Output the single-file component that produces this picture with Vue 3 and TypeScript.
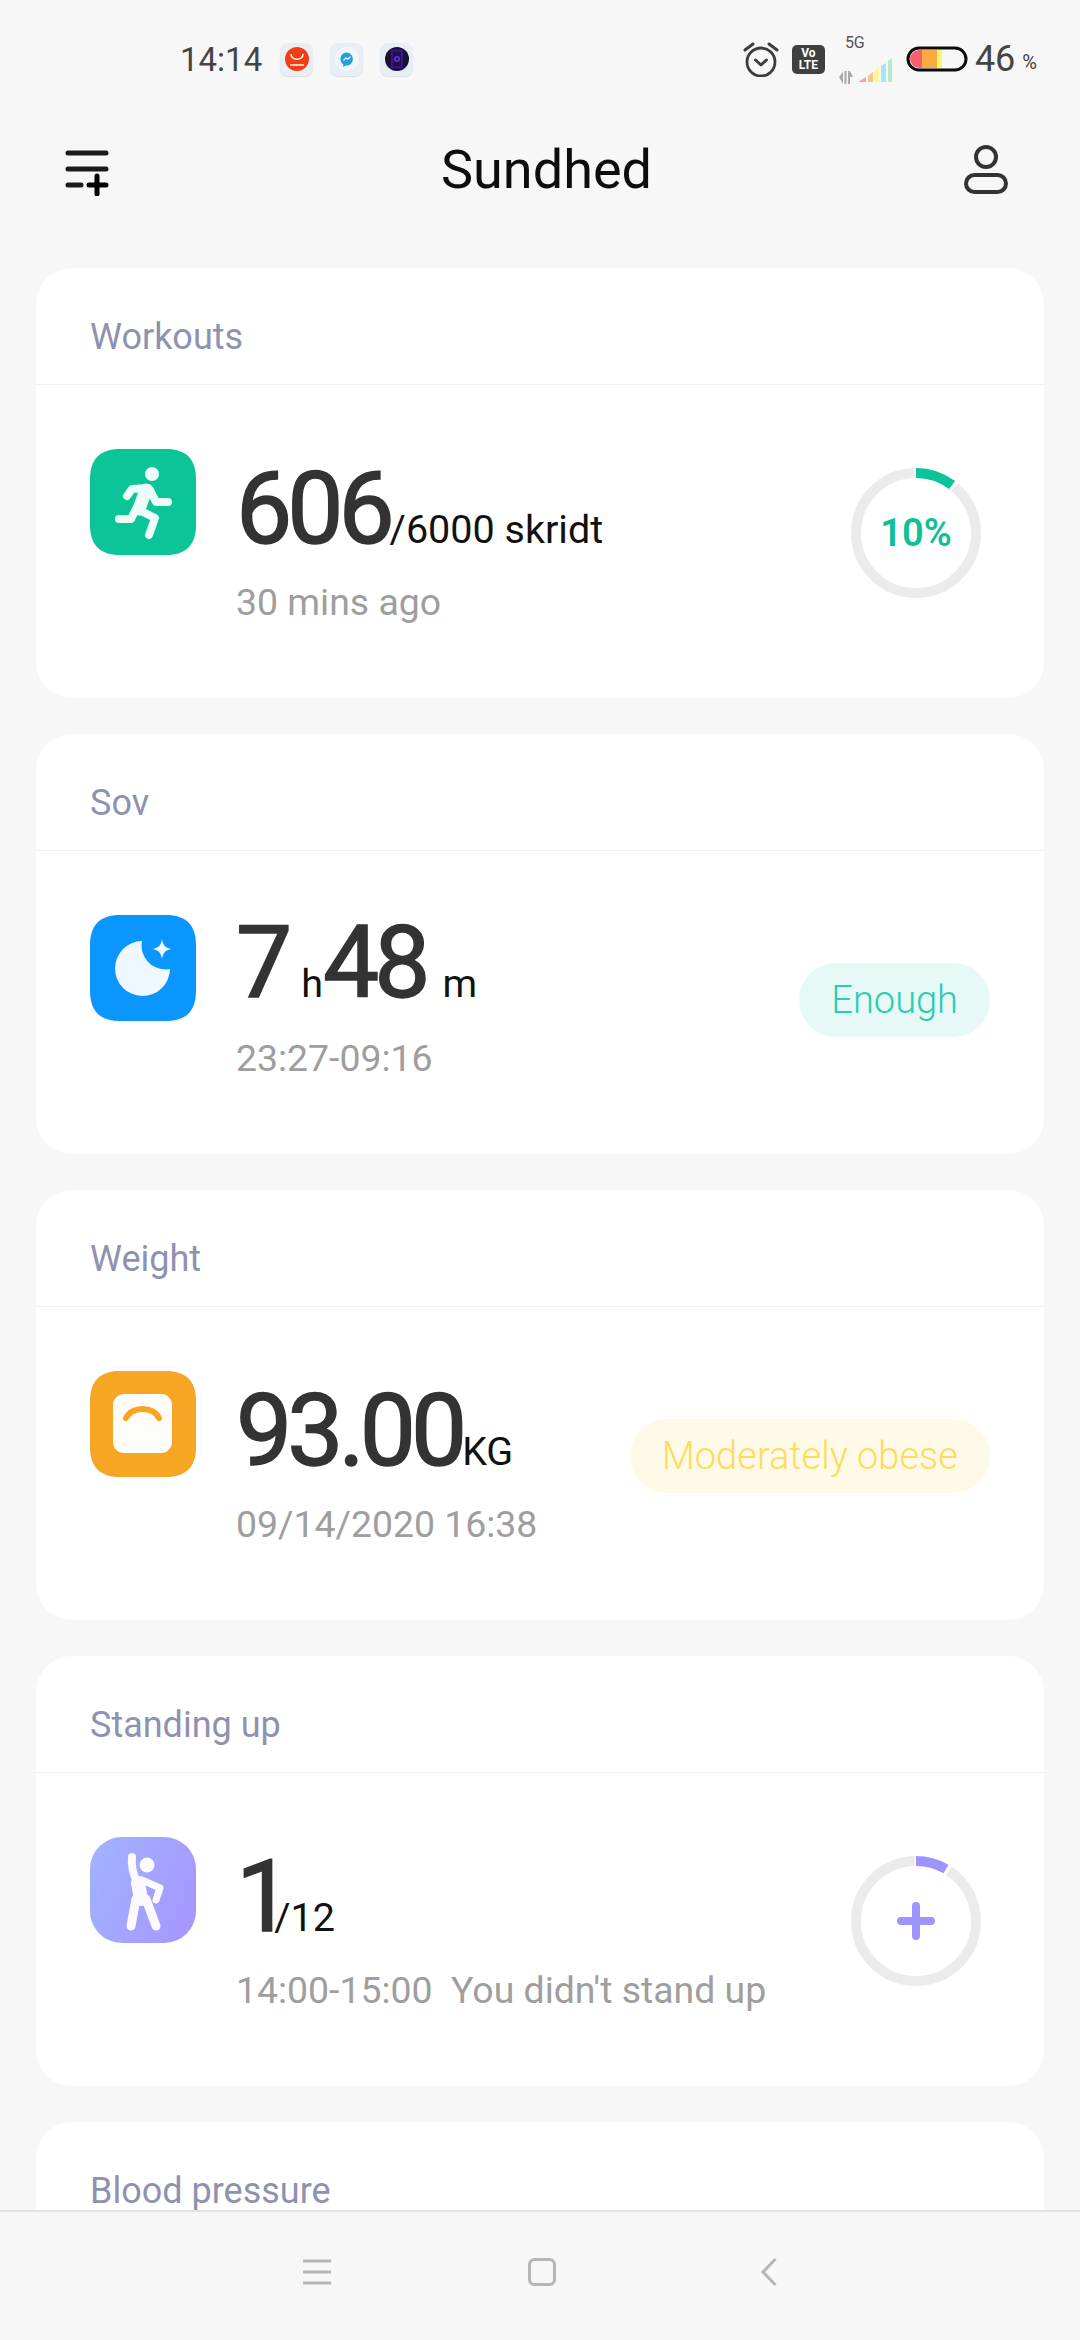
<script setup lang="ts">
const R = 60;
const CIRC = 2 * Math.PI * R;

// dasharray for a piece of the ring, degrees from 12 o'clock
const arc = (from: number, to: number) => {
  const len = ((to - from) / 360) * CIRC;
  const start = (from / 360) * CIRC;
  return { dasharray: `0 ${start} ${len} ${CIRC}` };
};

const squircle =
  'M30 0H76C96 0 106 10 106 30V76C106 96 96 106 76 106H30C10 106 0 96 0 76V30C0 10 10 0 30 0Z';
</script>

<template>
  <div class="page">
    <div class="status">
      <span class="time">14:14</span>
      <div class="app-badge first">
        <svg width="24" height="24" viewBox="0 0 24 24">
          <circle cx="12" cy="12" r="12" fill="#f23d16" />
          <path d="M6 7c0 7 12 7 12 0" fill="none" stroke="#fff" stroke-width="1.6" />
          <path d="M5 18h14" stroke="#ffc9b8" stroke-width="2" />
        </svg>
      </div>
      <div class="app-badge">
        <svg width="24" height="24" viewBox="0 0 24 24">
          <circle cx="12" cy="12" r="12" fill="#f2f6fa" />
          <path d="M12 5.500a6.500 6.500 0 0 0-3.800 11.800V20l2.500-1.400a6.500 6.500 0 1 0 1.300-13.100Z" fill="#239fdc" />
          <path d="M8.500 13.500l2.500-2.700 1.800 1.500 2.700-2.600" fill="none" stroke="#fff" stroke-width="1.200" />
        </svg>
      </div>
      <div class="app-badge">
        <svg width="24" height="24" viewBox="0 0 24 24">
          <circle cx="12" cy="12" r="12" fill="#17122e" />
          <rect x="6" y="2.500" width="12" height="19" fill="#3d0f9e" />
          <rect x="8" y="4.500" width="8" height="15" fill="#1d1440" />
          <circle cx="12" cy="12" r="2.200" fill="none" stroke="#6a2fe0" stroke-width="1.600" />
        </svg>
      </div>

      <div class="status-right">
        <svg class="alarm" width="36" height="35" viewBox="0 0 36 35">
          <circle cx="18" cy="20" r="14" fill="none" stroke="#3d3d3d" stroke-width="2.800" />
          <path d="M2 8l8-6M34 8l-8-6" stroke="#3d3d3d" stroke-width="3" stroke-linecap="round" />
          <path d="M12.500 18l5.500 5 5.500-5" fill="none" stroke="#3d3d3d" stroke-width="3" stroke-linecap="round" stroke-linejoin="round" />
        </svg>
        <div class="volte"><span>Vo</span><span>LTE</span></div>
        <div class="network">
          <span class="five-g">5G</span>
          <svg width="54" height="31" viewBox="0 0 54 31">
            <path d="M0 24l4-5v12zM5.500 18h2v13h-2zM9 18h2l3 6h-3v7H9z" fill="#a9a9a9" />
            <path d="M19 29l8-5v5z" fill="#f4a2aa" />
            <path d="M29 23l5-4v10h-5z" fill="#f8c48e" />
            <path d="M35 18l5-4v15h-5z" fill="#fbf6a4" />
            <path d="M42 13l5-3v19h-5z" fill="#a8e4f8" />
            <path d="M49 8l4-3v24h-4z" fill="#b5ecc2" />
          </svg>
        </div>
        <svg class="battery" width="62" height="26" viewBox="0 0 62 26">
          <path d="M16 4h15v18H16z" fill="#fbaa3e" />
          <path d="M31 4h5v18h-5z" fill="#fdf56e" />
          <path d="M16 4h-3a9 9 0 0 0 0 18h3z" fill="#f5606f" />
          <rect x="2" y="2" width="58" height="22" rx="11" fill="none" stroke="#0c0c0c" stroke-width="3" />
        </svg>
        <span class="level">46</span>
        <span class="percent">%</span>
      </div>
    </div>

    <div class="topbar">
      <svg class="menu-icon" width="44" height="46" viewBox="0 0 44 46">
        <path d="M3 3h38M3 19h38M3 35h13" stroke="#1a1a1a" stroke-width="5" stroke-linecap="round" />
        <path d="M24 35h17M32 26v18" stroke="#000" stroke-width="5" stroke-linecap="round" />
      </svg>
      <h1 class="title">Sundhed</h1>
      <svg class="person-icon" width="44" height="50" viewBox="0 0 44 50">
        <circle cx="22" cy="12" r="10" fill="none" stroke="#333" stroke-width="4" />
        <rect x="2" y="30" width="40" height="17" rx="8.500" fill="none" stroke="#333" stroke-width="4" />
      </svg>
    </div>

    <main class="list">
      <section class="card">
        <div class="card-head">Workouts</div>
        <div class="card-body">
          <svg class="icon" width="106" height="106" viewBox="0 0 106 106">
            <path :d="squircle" fill="#0bc497" />
            <g fill="none" stroke="#eefdf9" stroke-linecap="round" stroke-linejoin="round">
              <circle cx="62" cy="25" r="7" fill="#eefdf9" stroke="none" />
              <path d="M37 47l5-7 16-1" stroke-width="8" />
              <path d="M56 41l-7 19" stroke-width="13" />
              <path d="M60 41l6 12h12" stroke-width="8" />
              <path d="M47 60l18 9-6 17" stroke-width="8" />
              <path d="M46 60l-5 10H29" stroke-width="8" />
            </g>
          </svg>
          <div class="text">
            <div class="figure"><span class="num">606</span><span class="unit">/6000 skridt</span></div>
            <div class="sub">30 mins ago</div>
          </div>
          <div class="ring">
            <svg width="130" height="130" viewBox="0 0 130 130">
              <g fill="none" stroke-width="10" transform="rotate(-90 65 65)">
                <circle cx="65" cy="65" :r="R" stroke="#ebebeb" :stroke-dasharray="arc(40, 358).dasharray" />
                <circle cx="65" cy="65" :r="R" stroke="#0bc497" :stroke-dasharray="arc(0, 37).dasharray" />
              </g>
            </svg>
            <span class="ring-label">10%</span>
          </div>
        </div>
      </section>

      <section class="card">
        <div class="card-head">Sov</div>
        <div class="card-body compact">
          <svg class="icon" width="106" height="106" viewBox="0 0 106 106">
            <path :d="squircle" fill="#0a96fe" />
            <path d="M52 26A27.500 27.500 0 1 0 80 54 24 24 0 0 1 52 26Z" fill="#f0f8ff" />
            <path d="M72 24c1 6 3 9 9.500 10-6.500 1-8.500 4-9.500 10-1-6-3-9-9.500-10 6.500-1 8.500-4 9.500-10Z" fill="#f0f8ff" />
          </svg>
          <div class="text">
            <div class="figure">
              <span class="num">7</span><span class="unit hour">h</span><span class="num">48</span><span class="unit minute">m</span>
            </div>
            <div class="sub">23:27-09:16</div>
          </div>
          <span class="pill enough">Enough</span>
        </div>
      </section>

      <section class="card">
        <div class="card-head">Weight</div>
        <div class="card-body">
          <svg class="icon" width="106" height="106" viewBox="0 0 106 106">
            <path :d="squircle" fill="#f6a623" />
            <rect x="23" y="23" width="59" height="59" rx="11" fill="#fffdf9" />
            <path d="M36 47c6-12 27-12 33 0" fill="none" stroke="#f6a623" stroke-width="6" stroke-linecap="round" />
          </svg>
          <div class="text">
            <div class="figure"><span class="num">93.00</span><span class="unit">KG</span></div>
            <div class="sub">09/14/2020 16:38</div>
          </div>
          <span class="pill obese">Moderately obese</span>
        </div>
      </section>

      <section class="card">
        <div class="card-head">Standing up</div>
        <div class="card-body">
          <svg class="icon" width="106" height="106" viewBox="0 0 106 106">
            <defs>
              <linearGradient id="stand" x1="0" y1="0.300" x2="1" y2="0.700">
                <stop offset="0" stop-color="#a1b1ff" />
                <stop offset="1" stop-color="#a797ff" />
              </linearGradient>
            </defs>
            <rect width="106" height="106" rx="32" fill="url(#stand)" />
            <g fill="none" stroke="#fafaff" stroke-linecap="round" stroke-linejoin="round">
              <circle cx="57" cy="28" r="7.500" fill="#fafaff" stroke="none" />
              <path d="M42 20c-1 10 1 17 5 25" stroke-width="8" />
              <path d="M48 46l3 16" stroke-width="14" />
              <path d="M52 43l18 8-4 12" stroke-width="7" />
              <path d="M46 62l-5 27" stroke-width="9" />
              <path d="M56 62l10 27" stroke-width="9" />
            </g>
          </svg>
          <div class="text">
            <div class="figure"><span class="num one">1</span><span class="unit">/12</span></div>
            <div class="sub">14:00-15:00&nbsp; You didn't stand up</div>
          </div>
          <div class="ring">
            <svg width="130" height="130" viewBox="0 0 130 130">
              <g fill="none" stroke-width="10" transform="rotate(-90 65 65)">
                <circle cx="65" cy="65" :r="R" stroke="#ebebeb" :stroke-dasharray="arc(33, 358).dasharray" />
                <circle cx="65" cy="65" :r="R" stroke="#9d94fd" :stroke-dasharray="arc(0, 30).dasharray" />
              </g>
              <path d="M50 65h30M65 50v30" stroke="#9d94fd" stroke-width="8" stroke-linecap="round" />
            </svg>
          </div>
        </div>
      </section>

      <section class="card">
        <div class="card-head">Blood pressure</div>
      </section>
    </main>

    <nav class="navbar">
      <svg width="28" height="26" viewBox="0 0 28 26">
        <path d="M0 2h28M0 13h28M0 24h28" stroke="#b5b5b5" stroke-width="3" />
      </svg>
      <svg class="nav-home" width="28" height="28" viewBox="0 0 28 28">
        <rect x="1.500" y="1.500" width="25" height="25" rx="5" fill="none" stroke="#b5b5b5" stroke-width="3" />
      </svg>
      <svg width="16" height="28" viewBox="0 0 16 28">
        <path d="M14.500 1L2 14l12.500 13" fill="none" stroke="#b5b5b5" stroke-width="3" />
      </svg>
    </nav>
  </div>
</template>

<style>
html,
body {
  margin: 0;
  background: #f7f7f7;
}
</style>

<style scoped>
.page {
  display: flex;
  flex-direction: column;
  width: 1080px;
  height: 2340px;
  overflow: hidden;
  background: #f7f7f7;
  font-family: Roboto, sans-serif;
}

.status {
  display: flex;
  align-items: center;
  flex: none;
  height: 118px;
  padding-left: 180px;
  box-sizing: border-box;
}

.time {
  font-size: 33px;
  color: #444;
  width: 100px;
}

.app-badge {
  display: flex;
  align-items: center;
  justify-content: center;
  width: 33px;
  height: 33px;
  margin-right: 17px;
  border-radius: 8px;
  background: #e9eef4;
  box-shadow: 0 1px 1px #d8dde4;
}

.status-right {
  display: flex;
  align-items: center;
  margin-left: auto;
  padding-right: 43px;
  color: #444;
}

.volte {
  display: flex;
  flex-direction: column;
  align-items: center;
  justify-content: center;
  width: 33px;
  height: 29px;
  margin-left: 13px;
  border-radius: 5px;
  background: #404040;
  color: #fff;
  font-size: 12px;
  font-weight: 700;
  line-height: 12px;
}

.network {
  position: relative;
  width: 54px;
  margin-left: 14px;
  padding-top: 18px;
}

.network svg {
  display: block;
}

.five-g {
  position: absolute;
  top: -2px;
  left: 6px;
  font-size: 16px;
  color: #555;
}

.battery {
  margin-left: 13px;
}

.level {
  margin-left: 7px;
  font-size: 36px;
}

.percent {
  margin-left: 7px;
  margin-top: 6px;
  font-size: 20px;
}

.topbar {
  display: flex;
  align-items: center;
  justify-content: space-between;
  flex: none;
  height: 100px;
  padding: 0 72px 0 65px;
}

.menu-icon {
  margin-top: 10px;
}

.person-icon {
  margin-top: 4px;
}

.title {
  margin: 2px 0 0 20px;
  font-size: 54px;
  font-weight: 400;
  color: #0d0d0d;
}

.list {
  flex: 1;
  min-height: 0;
  overflow: hidden;
  display: flex;
  flex-direction: column;
  gap: 36px;
  padding: 50px 36px 0;
}

.card {
  flex: none;
  border-radius: 36px;
  background: #fff;
}

.card-head {
  height: 117px;
  box-sizing: border-box;
  padding: 46px 0 0 54px;
  border-bottom: 1px solid #f2f2f2;
  font-size: 36px;
  line-height: 46px;
  color: #8e92b0;
}

.card-body {
  display: flex;
  align-items: flex-start;
  padding: 64px 54px 71px;
}

.icon {
  flex: none;
}

.text {
  margin: 10px 0 0 40px;
}

.figure {
  display: flex;
  align-items: baseline;
  height: 100px;
  line-height: 100px;
  white-space: nowrap;
}

.num {
  font-size: 100px;
  font-weight: 400;
  letter-spacing: -5px;
  color: #333;
  -webkit-text-stroke: 1.5px #333;
}

.one {
  letter-spacing: -18px;
}

.unit {
  font-size: 39.5px;
  color: #111;
}

.hour {
  margin: 0 0 0 14px;
}

.minute {
  margin-left: 17px;
}

.sub {
  margin-top: 18px;
  font-size: 37.400px;
  line-height: 50px;
  color: #9e9e9e;
  white-space: nowrap;
}

.compact .text {
  margin-top: -2px;
}

.compact .sub {
  margin-top: 20px;
}

.ring {
  position: relative;
  flex: none;
  width: 130px;
  height: 130px;
  margin: 19px 9px 0 auto;
}

.ring svg {
  display: block;
}

.ring-label {
  position: absolute;
  inset: 0;
  display: flex;
  align-items: center;
  justify-content: center;
  font-size: 38px;
  font-weight: 600;
  color: #0fbf95;
}

.pill {
  flex: none;
  margin: 48px 0 0 auto;
  padding: 0 32px;
  border-radius: 37px;
  font-size: 38px;
  font-weight: 300;
  line-height: 74px;
}

.enough {
  background: #e6f9f6;
  color: #2accb2;
}

.obese {
  background: #fffae8;
  color: #fedb5c;
}

.navbar {
  display: flex;
  align-items: center;
  flex: none;
  height: 130px;
  padding: 0 0 8px 303px;
  box-sizing: border-box;
  border-top: 2px solid #e2e2e2;
  background: #f7f7f7;
}

.nav-home {
  margin: 0 205px 0 197px;
}
</style>
